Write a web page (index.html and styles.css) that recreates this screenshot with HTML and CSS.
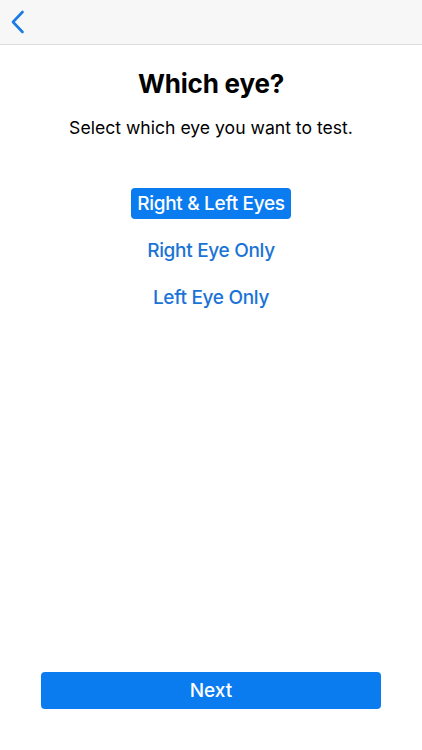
FILE: index.html
```html
<!DOCTYPE html>
<html lang="en">
<head>
  <meta charset="UTF-8">
  <meta name="viewport" content="width=device-width, initial-scale=1.0">
  <title>Which eye?</title>
  <link rel="stylesheet" href="styles.css">
</head>
<body>

  <header class="navbar">
    <button class="back" aria-label="Back">
      <svg width="16" height="24" viewBox="0 0 16 24">
        <path d="M12.5 2 L3 12 L12.5 22" fill="none" stroke="#1a7be6" stroke-width="2.6" stroke-linecap="round" stroke-linejoin="round"/>
      </svg>
    </button>
  </header>

  <main class="content">
    <h1>Which eye?</h1>
    <p class="subtitle">Select which eye you want to test.</p>

    <div class="options">
      <button class="option selected">Right &amp; Left Eyes</button>
      <button class="option">Right Eye Only</button>
      <button class="option">Left Eye Only</button>
    </div>
  </main>

  <footer class="bottom">
    <button class="next">Next</button>
  </footer>

</body>
</html>
```

FILE: styles.css
```css
body {
  font-family: Inter, "Noto Sans", sans-serif;
  background-color: #fff;
  margin: 0;
  padding: 0;
  height: 750px;
  display: flex;
  flex-direction: column;
  color: #000;
}
.navbar {
  height: 45px;
  background-color: #f7f7f7;
  border-bottom: 1px solid #dcdcdc;
  display: flex;
  align-items: center;
  box-sizing: border-box;
  padding-left: 10px;
}
.back {
  background: none;
  border: none;
  padding: 0;
  width: 20px;
  height: 24px;
  display: flex;
  align-items: center;
  margin-top: -1px;
}
.content {
  flex: 1;
  text-align: center;
  padding-top: 21px;
}
h1 {
  font-size: 26px;
  font-weight: 700;
  margin: 0;
  line-height: 36px;
  letter-spacing: -0.2px;
}
.subtitle {
  font-size: 17.6px;
  margin: 14px 0 0;
  line-height: 24px;
}
.options {
  margin-top: 48px;
  display: flex;
  flex-direction: column;
  align-items: center;
  gap: 16px;
}
.option {
  font-family: inherit;
  font-size: 19px;
  font-weight: 500;
  color: #1a73d6;
  background: none;
  border: none;
  border-radius: 4px;
  height: 31px;
  padding: 0 6px;
  letter-spacing: -0.3px;
}
.option.selected {
  background-color: #0a7cf0;
  color: #fff;
}
.bottom {
  padding: 0 41px 41px;
}
.next {
  width: 100%;
  height: 37px;
  background-color: #0a7cf0;
  color: #fff;
  border: none;
  border-radius: 4px;
  font-family: inherit;
  font-size: 19px;
  font-weight: 500;
}
```
